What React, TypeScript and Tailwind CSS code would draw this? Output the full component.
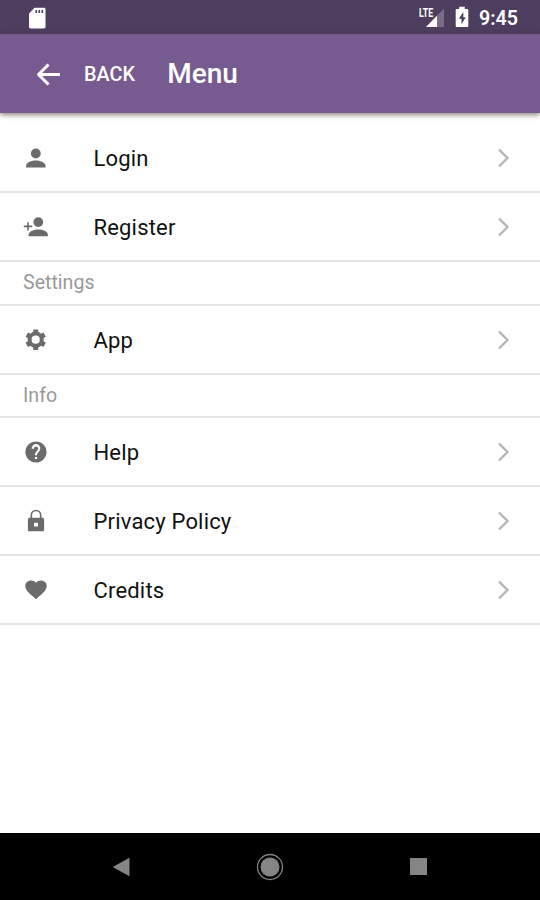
import type { ReactNode } from 'react';

function PersonIcon() {
  return (
    <svg width="26" height="26" viewBox="0 0 26 26" fill="#6b6b6b">
      <circle cx="12.800" cy="8.500" r="4.900" />
      <path d="M3.100 22.500v-1.600c0-3.100 4.200-5.500 9.700-5.500s9.700 2.400 9.700 5.500v1.600z" />
    </svg>
  );
}

function PersonAddIcon() {
  return (
    <svg width="26" height="26" viewBox="0 0 26 26" fill="#6b6b6b">
      <circle cx="15.300" cy="8.100" r="4.900" />
      <path d="M5.600 22.300v-1.500c0-3.100 4.100-5.400 9.700-5.400s9.600 2.300 9.600 5.400v1.500z" />
      <path d="M5 8.200v8.400M.8 12.400h8.400" stroke="#6b6b6b" strokeWidth="1.600" />
    </svg>
  );
}

function GearIcon() {
  return (
    <svg width="26" height="26" viewBox="0 0 26 26" fill="none" stroke="#6b6b6b">
      <circle cx="12.700" cy="12.700" r="6.100" strokeWidth="4" />
      <g strokeWidth="5">
        <path d="M12.700 2.400v3.400M12.700 19.600V23" />
        <path d="M3.780 7.550l2.770 1.600M18.850 16.250l2.770 1.600" />
        <path d="M3.780 17.850l2.770-1.600M18.850 9.150l2.770-1.600" />
      </g>
    </svg>
  );
}

function HelpIcon() {
  return (
    <svg width="26" height="26" viewBox="0 0 24 24" fill="#6b6b6b">
      <path d="M12 2.200A9.800 9.800 0 1 0 12 21.800 9.800 9.800 0 0 0 12 2.200zm1 16.300h-2v-2h2zm2.070-7.250-.9.920C13.450 12.900 13 13.500 13 15h-2v-.5c0-1.100.45-2.100 1.170-2.830l1.240-1.260A2 2 0 1 0 10 9H8a4 4 0 1 1 7.070 2.250z" />
    </svg>
  );
}

function LockIcon() {
  return (
    <svg width="26" height="26" viewBox="0 0 26 26" fill="#6b6b6b">
      <path d="M8.300 10V7.200a4.700 4.700 0 0 1 9.400 0V10" fill="none" stroke="#6b6b6b" strokeWidth="1.600" />
      <path
        fillRule="evenodd"
        d="M6.500 9.800h13c.9 0 1.600.7 1.600 1.600v10.300c0 .9-.7 1.600-1.600 1.600h-13c-.9 0-1.600-.7-1.600-1.600V11.400c0-.9.7-1.600 1.600-1.600zM11 14.700v3.900h4v-3.900z"
      />
    </svg>
  );
}

function HeartIcon() {
  return (
    <svg width="26" height="26" viewBox="0 0 24 24" fill="#6b6b6b">
      <path d="m12 20.500-1.450-1.250C5.400 14.700 2.100 11.900 2.100 8.300 2.100 5.400 4.420 3.300 7.500 3.300c1.740 0 3.410.8 4.500 2 1.090-1.200 2.760-2 4.500-2 3.080 0 5.400 2.100 5.400 5 0 3.600-3.300 6.400-8.450 10.950z" />
    </svg>
  );
}

function Row({ icon, label }: { icon: ReactNode; label: string }) {
  return (
    <div className="flex h-[68.800px] items-center border-b-2 border-[#e5e5e5] pt-[0.600px] pr-[30px] pl-[22.500px]">
      <div className="w-[71px]">{icon}</div>
      <span className="flex-1 pt-0.5 text-[22px] leading-7 tracking-[0.18px] text-[#111]">{label}</span>
      <svg width="13" height="20" viewBox="0 0 13 20" fill="none" stroke="#b5b5b5" strokeWidth="2.400">
        <path d="m2 1.500 8.500 8.500L2 18.500" />
      </svg>
    </div>
  );
}

function Section({ label }: { label: string }) {
  return (
    <div className="flex h-[43.700px] items-center border-b-2 border-[#e5e5e5] pl-[23px] text-[19.600px] leading-6 text-[#999]">
      {label}
    </div>
  );
}

export default function App() {
  return (
    <div className="flex h-[900px] w-[540px] flex-col overflow-hidden bg-white font-[Roboto,sans-serif]">
      <div className="flex h-[34px] shrink-0 items-center bg-[#4d3d5e] pr-[22px] pl-[28px] text-white">
        <svg className="mt-px" width="18" height="22" viewBox="0 0 18 22">
          <path d="M6.500 .8h9.300c1.100 0 1.700.6 1.700 1.700v17.300c0 1.100-.6 1.700-1.700 1.700H2.700c-1.100 0-1.700-.6-1.700-1.700V6.500z" fill="#fff" />
          <path d="M8.300 3v3M11.300 3v3M14.300 3v3" stroke="#4d3d5e" strokeWidth="1.600" />
        </svg>
        <div className="relative ml-auto h-[22px] w-[26px]">
          <svg className="size-full" viewBox="0 0 26 22">
            <path d="M7 21 25 2.500V21z" fill="#7a6c88" />
            <path d="M7 21 18 9.700V21z" fill="#fff" />
          </svg>
          <span className="absolute top-0 left-0 origin-left scale-x-[.7] text-[12.500px] leading-[13px] font-bold">LTE</span>
        </div>
        <svg className="ml-[10px]" width="14" height="22" viewBox="0 0 14 22">
          <path d="M4.200 3V.7h5.600V3H12c.8 0 1.300.5 1.300 1.300v15.400c0 .8-.5 1.300-1.300 1.300H2c-.8 0-1.300-.5-1.300-1.300V4.300C.7 3.500 1.200 3 2 3z" fill="#fff" />
          <path d="M8.300 6 3.800 12.800h2.700v5.400l4.200-6.900H8.300z" fill="#4d3d5e" />
        </svg>
        <span className="ml-[10px] pt-[3px] text-[19.700px] leading-6 font-semibold">9:45</span>
      </div>
      <header className="z-10 flex h-[79px] shrink-0 items-center bg-[#765a90] pl-[36px] text-white shadow-[0_2px_5px_rgba(70,50,50,0.6)]">
        <svg width="25" height="24" viewBox="0 0 25 24" fill="none" stroke="#fff" strokeWidth="3" strokeLinejoin="round">
          <path d="M24 12.500H3M12.500 2.500 2.500 12.500l10 10" />
        </svg>
        <span className="ml-[23px] pt-[2px] text-[19.800px] leading-6 font-medium">BACK</span>
        <span className="ml-[32.400px] text-[28px] leading-8 font-medium">Menu</span>
      </header>
      <main className="flex-1 pt-[11.700px]">
        <Row icon={<PersonIcon />} label="Login" />
        <Row icon={<PersonAddIcon />} label="Register" />
        <Section label="Settings" />
        <Row icon={<GearIcon />} label="App" />
        <Section label="Info" />
        <Row icon={<HelpIcon />} label="Help" />
        <Row icon={<LockIcon />} label="Privacy Policy" />
        <Row icon={<HeartIcon />} label="Credits" />
      </main>
      <nav className="flex h-[67px] shrink-0 items-center bg-black pl-[112px]">
        <svg width="18" height="20" viewBox="0 0 18 20" fill="#858585">
          <path d="M.7 10 17.500.700v18.600z" />
        </svg>
        <svg className="ml-[126px]" width="28" height="28" viewBox="0 0 28 28" fill="none">
          <circle cx="14" cy="14" r="9.500" fill="#858585" />
          <circle cx="14" cy="14" r="12.500" stroke="#858585" strokeWidth="1.300" />
        </svg>
        <div className="ml-[126px] size-[17px] bg-[#858585]" />
      </nav>
    </div>
  );
}
